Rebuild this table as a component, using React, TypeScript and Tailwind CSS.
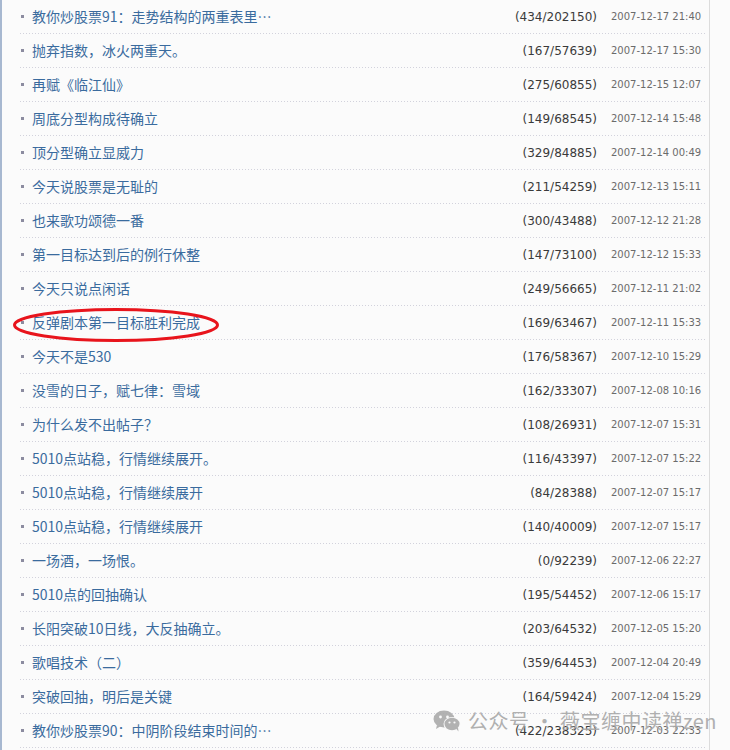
import React from "react";

const rows: [string, string, string][] = [
  ["教你炒股票91：走势结构的两重表里…", "(434/202150)", "2007-12-17 21:40"],
  ["抛弃指数，冰火两重天。", "(167/57639)", "2007-12-17 15:30"],
  ["再赋《临江仙》", "(275/60855)", "2007-12-15 12:07"],
  ["周底分型构成待确立", "(149/68545)", "2007-12-14 15:48"],
  ["顶分型确立显威力", "(329/84885)", "2007-12-14 00:49"],
  ["今天说股票是无耻的", "(211/54259)", "2007-12-13 15:11"],
  ["也来歌功颂德一番", "(300/43488)", "2007-12-12 21:28"],
  ["第一目标达到后的例行休整", "(147/73100)", "2007-12-12 15:33"],
  ["今天只说点闲话", "(249/56665)", "2007-12-11 21:02"],
  ["反弹剧本第一目标胜利完成", "(169/63467)", "2007-12-11 15:33"],
  ["今天不是530", "(176/58367)", "2007-12-10 15:29"],
  ["没雪的日子，赋七律：雪域", "(162/33307)", "2007-12-08 10:16"],
  ["为什么发不出帖子？", "(108/26931)", "2007-12-07 15:31"],
  ["5010点站稳，行情继续展开。", "(116/43397)", "2007-12-07 15:22"],
  ["5010点站稳，行情继续展开", "(84/28388)", "2007-12-07 15:17"],
  ["5010点站稳，行情继续展开", "(140/40009)", "2007-12-07 15:17"],
  ["一场酒，一场恨。", "(0/92239)", "2007-12-06 22:27"],
  ["5010点的回抽确认", "(195/54452)", "2007-12-06 15:17"],
  ["长阳突破10日线，大反抽确立。", "(203/64532)", "2007-12-05 15:20"],
  ["歌唱技术（二）", "(359/64453)", "2007-12-04 20:49"],
  ["突破回抽，明后是关键", "(164/59424)", "2007-12-04 15:29"],
  ["教你炒股票90：中阴阶段结束时间的…", "(422/238325)", "2007-12-03 22:33"],
];

const cjk = { fontFamily: '"Noto Sans CJK SC", "Noto Sans", sans-serif' };
const verd = { fontFamily: '"DejaVu Sans", Verdana, sans-serif' };

function WeChatIcon() {
  return (
    <svg width="28" height="22" viewBox="0 0 28 22">
      <ellipse cx="11" cy="9" rx="10.5" ry="8.5" fill="#ababab" />
      <path d="M4 15 L3 19 L8 16 Z" fill="#ababab" />
      <circle cx="7.5" cy="7" r="1.4" fill="#fafafa" />
      <circle cx="14.5" cy="7" r="1.4" fill="#fafafa" />
      <ellipse cx="19" cy="14" rx="8.5" ry="7" fill="#fafafa" />
      <ellipse cx="19" cy="14" rx="7.5" ry="6.2" fill="#ababab" />
      <path d="M23 18.5 L25.5 21.5 L25 17.5 Z" fill="#ababab" />
      <circle cx="16.5" cy="12.5" r="1.1" fill="#fafafa" />
      <circle cx="21.5" cy="12.5" r="1.1" fill="#fafafa" />
    </svg>
  );
}

export default function App() {
  return (
    <div className="relative w-[730px] h-[750px] overflow-hidden bg-[#fbfbfb] border-l-2 border-[#a7b8d0]">
      <div className="w-[708px] h-full border-r border-[#dcdcdc] pl-[18px]">
        {rows.map(([t, c, d], i) => (
          <div key={i} className="w-[686px]">
            <div className="h-[33px] flex items-center">
              <div className="ml-[1px] w-[3px] h-[3px] bg-[#8c8ca0] shrink-0" />
              <div className="ml-[8px] text-[14px] text-[#3a6b9e] whitespace-nowrap" style={cjk}>
                {t}
              </div>
              <div className="flex-1" />
              <div className="text-[12px] text-[#3a3a3a] whitespace-nowrap" style={verd}>
                {c}
              </div>
              <div className="ml-[14px] w-[95px] text-[10px] text-[#6b6b6b] whitespace-nowrap" style={verd}>
                {d}
              </div>
            </div>
            <div className="h-[1px] bg-[repeating-linear-gradient(to_right,#d2d2dc_0px,#d2d2dc_1px,transparent_1px,transparent_3px)]" />
          </div>
        ))}
      </div>
      <svg
        className="absolute left-[10px] top-[307px] pointer-events-none"
        width="208"
        height="36"
        viewBox="0 0 208 36"
      >
        <ellipse cx="104" cy="18" rx="101.5" ry="15.5" fill="none" stroke="#e8141c" strokeWidth="3" />
      </svg>
      <div className="absolute left-[431px] top-[706px] flex items-center gap-[7px] opacity-90">
        <WeChatIcon />
        <span className="text-[20px] text-[#a8a8a8] tracking-[0.5px] whitespace-nowrap" style={cjk}>
          公众号 · 薇宝缠中读禅zen
        </span>
      </div>
    </div>
  );
}
